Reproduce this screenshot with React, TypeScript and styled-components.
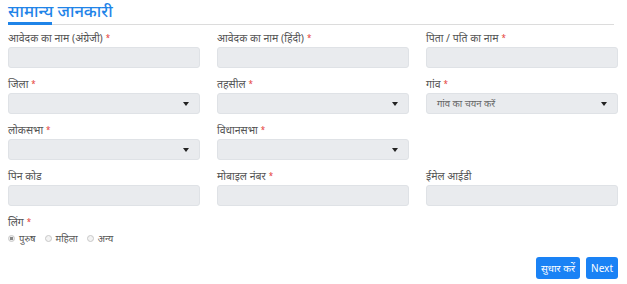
import React from "react";
import styled, { createGlobalStyle } from "styled-components";

const Global = createGlobalStyle`
  body { margin: 0; background: #fff; font-family: "Noto Sans", "Liberation Sans", sans-serif; }
  * { box-sizing: border-box; }
`;

const Page = styled.div`
  width: 627px;
  height: 284px;
  padding: 0 9px 0 8px;
  display: flex;
  flex-direction: column;
`;

const TitleBar = styled.div`
  border-bottom: 1px solid #dcdcdc;
  height: 25px;
  margin-right: 4px;
`;

const Title = styled.h2`
  margin: 0;
  display: inline-block;
  font-size: 16.5px;
  font-weight: 500;
  line-height: 22px;
  color: #1f84e8;
  border-bottom: 3px solid #1f84e8;
  width: 44px;
  white-space: nowrap;
  height: 25px;
`;

const Grid = styled.div`
  display: grid;
  grid-template-columns: repeat(3, 192px);
  column-gap: 17px;
  row-gap: 9px;
  margin-top: 6px;
`;

const Field = styled.div`
  display: flex;
  flex-direction: column;
`;

const Label = styled.label`
  font-size: 10.5px;
  color: #555;
  line-height: 14px;
  height: 16px;
`;

const Star = styled.span`
  color: #e53935;
  margin-left: 3px;
  font-size: 8px;
  vertical-align: 1px;
`;

const Input = styled.div`
  height: 21px;
  background: #e9ebee;
  border: 1px solid #dfe2e6;
  border-radius: 3px;
`;

const Select = styled(Input)`
  display: flex;
  align-items: center;
  padding: 0 10px;
  font-size: 9.5px;
  color: #666;
`;

const Caret = styled.span`
  width: 0;
  height: 0;
  border-left: 3px solid transparent;
  border-right: 3px solid transparent;
  border-top: 4px solid #222;
  margin-left: auto;
`;

const Radios = styled.div`
  display: flex;
  align-items: center;
  gap: 9px;
  margin-top: 1px;
`;

const RadioItem = styled.span`
  display: flex;
  align-items: center;
  gap: 4px;
  font-size: 9.5px;
  color: #555;
`;

const Dot = styled.span<{ $on?: boolean }>`
  width: 7px;
  height: 7px;
  border-radius: 50%;
  border: 1px solid #c8c8c8;
  background: ${(p) => (p.$on ? "radial-gradient(circle, #888 0 1.5px, #eee 2px)" : "#f3f3f3")};
`;

const Actions = styled.div`
  display: flex;
  justify-content: flex-end;
  gap: 6px;
  margin-top: 12px;
`;

const Button = styled.button`
  background: #1a82f5;
  color: #fff;
  border: none;
  border-radius: 3px;
  height: 22px;
  padding: 0 5px;
  font-size: 10px;
  font-family: "Noto Sans", "Liberation Sans", sans-serif;
`;

const Spacer = styled.div``;

const App: React.FC = () => (
  <>
    <Global />
    <Page>
      <TitleBar>
        <Title>सामान्य जानकारी</Title>
      </TitleBar>
      <Grid>
        <Field>
          <Label>आवेदक का नाम (अंग्रेजी)<Star>*</Star></Label>
          <Input />
        </Field>
        <Field>
          <Label>आवेदक का नाम (हिंदी)<Star>*</Star></Label>
          <Input />
        </Field>
        <Field>
          <Label>पिता / पति का नाम<Star>*</Star></Label>
          <Input />
        </Field>
        <Field>
          <Label>जिला<Star>*</Star></Label>
          <Select><Caret /></Select>
        </Field>
        <Field>
          <Label>तहसील<Star>*</Star></Label>
          <Select><Caret /></Select>
        </Field>
        <Field>
          <Label>गांव<Star>*</Star></Label>
          <Select>गांव का चयन करें<Caret /></Select>
        </Field>
        <Field>
          <Label>लोकसभा<Star>*</Star></Label>
          <Select><Caret /></Select>
        </Field>
        <Field>
          <Label>विधानसभा<Star>*</Star></Label>
          <Select><Caret /></Select>
        </Field>
        <Spacer />
        <Field>
          <Label>पिन कोड</Label>
          <Input />
        </Field>
        <Field>
          <Label>मोबाइल नंबर<Star>*</Star></Label>
          <Input />
        </Field>
        <Field>
          <Label>ईमेल आईडी</Label>
          <Input />
        </Field>
        <Field>
          <Label>लिंग<Star>*</Star></Label>
          <Radios>
            <RadioItem><Dot $on />पुरुष</RadioItem>
            <RadioItem><Dot />महिला</RadioItem>
            <RadioItem><Dot />अन्य</RadioItem>
          </Radios>
        </Field>
      </Grid>
      <Actions>
        <Button>सुधार करें</Button>
        <Button>Next</Button>
      </Actions>
    </Page>
  </>
);

export default App;
